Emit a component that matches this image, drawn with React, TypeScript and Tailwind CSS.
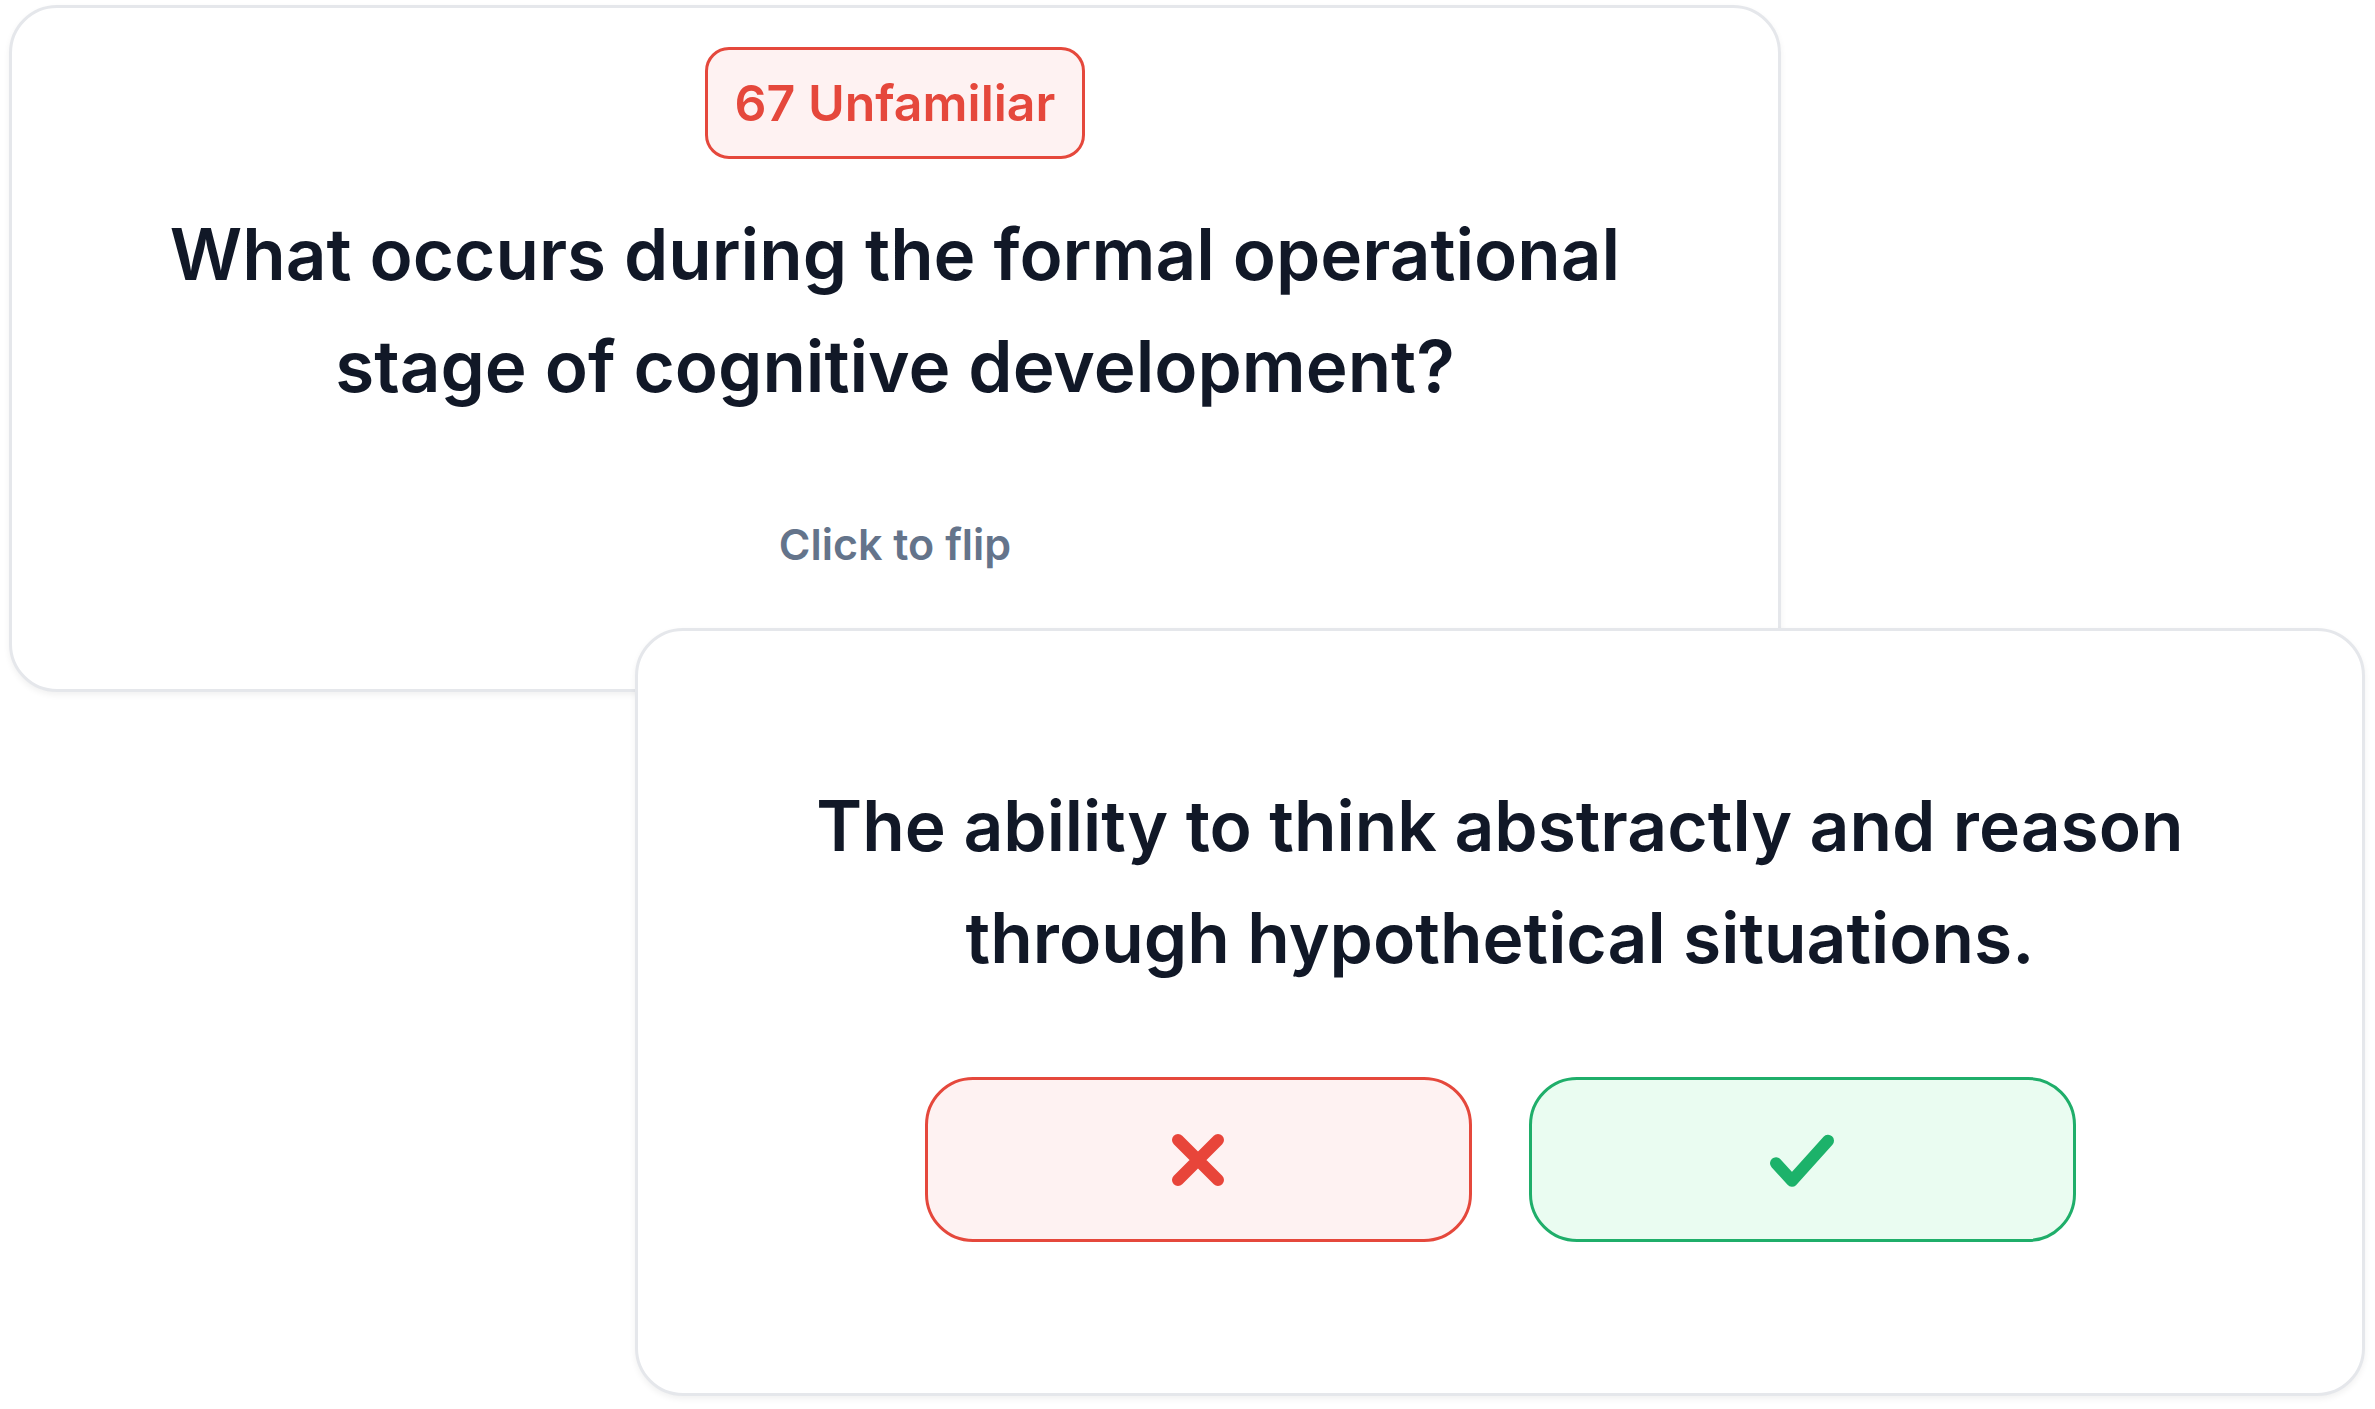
export default function App() {
  return (
    <div className="min-h-screen bg-white pt-[5px] pl-[9px] font-['Inter','Noto_Sans',sans-serif] text-[#111827]">
      {/* Front of the card */}
      <div className="w-[1772px] h-[687px] rounded-[48px] border-[3px] border-[#e5e7eb] bg-white shadow-[0_3px_6px_rgba(0,0,0,0.06)] flex flex-col items-center pt-[39px]">
        <span className="h-[112px] flex items-center px-[27px] rounded-[24px] border-[3px] border-[#e5483c] bg-[#fef2f2] text-[50px] font-semibold text-[#e5483c]">
          67 Unfamiliar
        </span>
        <h2 className="mt-[39px] px-[130px] text-center text-[71px] leading-[112px] font-semibold">
          What occurs during the formal operational stage of cognitive development?
        </h2>
        <p className="mt-[92px] text-[43px] leading-[60px] font-semibold text-[#64748b]">Click to flip</p>
      </div>

      {/* Back of the card, stacked over the front */}
      <div className="relative z-10 ml-[626px] -mt-[64px] w-[1730px] h-[768px] rounded-[48px] border-[3px] border-[#e5e7eb] bg-white shadow-[0_3px_6px_rgba(0,0,0,0.06)] flex flex-col items-center pt-[139px]">
        <p className="max-w-[1450px] text-center text-[69.5px] leading-[112px] font-semibold">
          The ability to think abstractly and reason through hypothetical situations.
        </p>
        <div className="mt-[83px] flex gap-[57px]">
          <button className="w-[547px] h-[165px] rounded-[48px] border-[3px] border-[#e5483c] bg-[#fef2f2] flex items-center justify-center">
            <svg width="96" height="96" viewBox="0 0 24 24" fill="none" stroke="#e8453a" strokeWidth="3" strokeLinecap="round">
              <path d="M7 7 17 17M17 7 7 17" />
            </svg>
          </button>
          <button className="w-[547px] h-[165px] rounded-[48px] border-[3px] border-[#1fae6a] bg-[#eafcf1] flex items-center justify-center">
            <svg width="96" height="96" viewBox="0 0 24 24" fill="none" stroke="#1cb26a" strokeWidth="3" strokeLinecap="round" strokeLinejoin="round">
              <path d="M5.5 12.8 9.5 17.2 18.5 7.2" />
            </svg>
          </button>
        </div>
      </div>
    </div>
  );
}
